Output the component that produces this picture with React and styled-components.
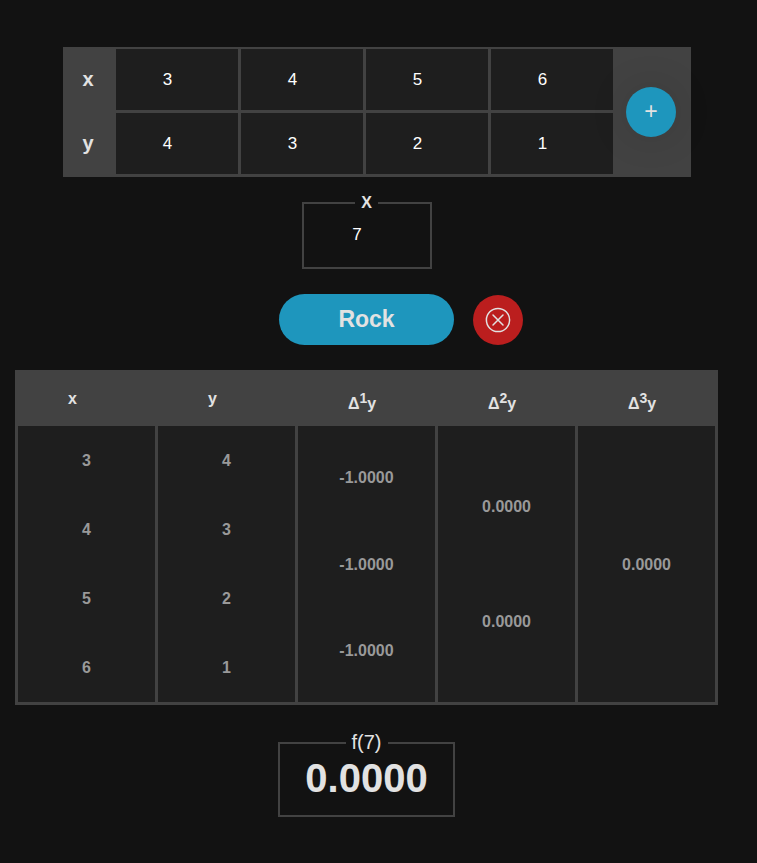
import React, { useState } from "react";
import styled, { createGlobalStyle } from "styled-components";

const GlobalStyle = createGlobalStyle`
  *, *::before, *::after { box-sizing: border-box; }
  body {
    margin: 0;
    background: #121212;
    color: #e2e2e2;
    font-family: "Liberation Sans", Arial, sans-serif;
    font-size: 16px;
  }
`;

const Page = styled.main`
  display: flex;
  flex-direction: column;
  align-items: center;
  padding: 47px 24px 46px 0;
`;

const PointsPanel = styled.section`
  display: flex;
  align-items: center;
  margin-left: 21px;
  padding: 2px 15px 3px 0;
  background: #424242;
`;

const PointsTable = styled.table`
  display: block;
  margin-right: 13px;

  tbody {
    display: grid;
    gap: 3px;
  }

  tr {
    display: grid;
    grid-template-columns: 50px repeat(4, 122px);
    gap: 3px;
  }

  th {
    display: grid;
    place-items: center;
    padding: 0;
    font-size: 20px;
  }

  td {
    padding: 0;
    background: #1e1e1e;
  }
`;

const NumberInput = styled.input`
  display: block;
  width: 100%;
  height: ${(p) => p.$height}px;
  padding: 0 4px 0 0;
  border: 0;
  outline: 0;
  background: transparent;
  color: #fff;
  font-family: inherit;
  font-size: 17px;
  text-align: center;
`;

const RoundButton = styled.button`
  display: grid;
  place-items: center;
  width: 50px;
  height: 50px;
  padding: 0;
  border: 0;
  border-radius: 50%;
  background: ${(p) => p.$color};
  color: #e2e2e2;
  box-shadow: ${(p) => (p.$raised ? "0 0 40px rgba(0, 0, 0, 0.12)" : "none")};
  font: 23px "Liberation Sans", Arial, sans-serif;
  cursor: pointer;
`;

const Field = styled.fieldset`
  width: ${(p) => p.$width}px;
  margin: ${(p) => p.$top}px 0 0;
  padding: 0 0 ${(p) => p.$bottom}px;
  border: 2px solid #424242;
  text-align: center;
`;

const Legend = styled.legend`
  margin: 0 auto;
  padding: 0 6px;
  font-size: ${(p) => p.$size}px;
  font-weight: ${(p) => (p.$bold ? "bold" : "normal")};
`;

const Result = styled.output`
  display: block;
  font-size: 40px;
  font-weight: bold;
  line-height: 49px;
`;

const Actions = styled.div`
  display: grid;
  grid-template-columns: 1fr auto 1fr;
  align-items: center;
  column-gap: 19px;
  width: 100%;
  margin-top: 25px;
`;

const PrimaryButton = styled.button`
  grid-column: 2;
  width: 175px;
  height: 51px;
  padding: 0;
  border: 0;
  border-radius: 26px;
  background: #1e96bd;
  color: #e2e2e2;
  font: bold 23px "Liberation Sans", Arial, sans-serif;
  cursor: pointer;
`;

const DifferenceTable = styled.table`
  display: block;
  width: calc(100% - 30px);
  margin-top: 25px;
  padding: 0 3px 3px;
  background: #424242;

  thead, tbody { display: block; }

  tr {
    display: grid;
    grid-template-columns: repeat(5, minmax(0, 1fr));
    gap: 3px;
  }

  th {
    height: 56px;
    padding: 20px 0 0 50px;
    text-align: left;
  }

  sup { font-size: 14px; }

  td {
    display: flex;
    flex-direction: column;
    justify-content: space-evenly;
    padding: 0;
    background: #1e1e1e;
    color: #999;
    font-weight: bold;
  }
`;

const Value = styled.span`
  height: 69px;
  line-height: 69px;
  text-align: center;
`;

const ClearIcon = () => (
  <svg width="26" height="26" viewBox="0 0 26 26" fill="none" stroke="currentColor" strokeWidth="1.5" strokeLinecap="round" aria-hidden="true">
    <circle cx="13" cy="13" r="11.6" />
    <path d="M8 8l10 10M18 8L8 18" />
  </svg>
);

const columns = [
  ["3", "4", "5", "6"],
  ["4", "3", "2", "1"],
  ["-1.0000", "-1.0000", "-1.0000"],
  ["0.0000", "0.0000"],
  ["0.0000"],
];

export default function App() {
  const [points, setPoints] = useState({ x: [3, 4, 5, 6], y: [4, 3, 2, 1] });
  const [target, setTarget] = useState("7");

  const change = (axis, index, value) =>
    setPoints({ ...points, [axis]: points[axis].map((v, i) => (i === index ? value : v)) });

  return (
    <>
      <GlobalStyle />
      <Page>
        <PointsPanel>
          <PointsTable>
            <tbody>
              {["x", "y"].map((axis) => (
                <tr key={axis}>
                  <th scope="row">{axis}</th>
                  {points[axis].map((value, i) => (
                    <td key={i}>
                      <NumberInput
                        type="number"
                        $height={61}
                        aria-label={`${axis} ${i + 1}`}
                        value={value}
                        onChange={(e) => change(axis, i, e.target.value)}
                      />
                    </td>
                  ))}
                </tr>
              ))}
            </tbody>
          </PointsTable>
          <RoundButton type="button" $color="#1e96bd" $raised aria-label="Add point">+</RoundButton>
        </PointsPanel>

        <Field $width={130} $top={17} $bottom={10}>
          <Legend $size={16} $bold>X</Legend>
          <NumberInput
            type="number"
            $height={45}
            aria-label="X"
            value={target}
            onChange={(e) => setTarget(e.target.value)}
          />
        </Field>

        <Actions>
          <PrimaryButton type="button">Rock</PrimaryButton>
          <RoundButton type="button" $color="#bb1e1e" aria-label="Clear">
            <ClearIcon />
          </RoundButton>
        </Actions>

        <DifferenceTable>
          <thead>
            <tr>
              <th scope="col">x</th>
              <th scope="col">y</th>
              {[1, 2, 3].map((n) => (
                <th scope="col" key={n}>Δ<sup>{n}</sup>y</th>
              ))}
            </tr>
          </thead>
          <tbody>
            <tr>
              {columns.map((values, c) => (
                <td key={c}>
                  {values.map((v, i) => <Value key={i}>{v}</Value>)}
                </td>
              ))}
            </tr>
          </tbody>
        </DifferenceTable>

        <Field $width={177} $top={26} $bottom={12}>
          <Legend $size={20}>f(7)</Legend>
          <Result>0.0000</Result>
        </Field>
      </Page>
    </>
  );
}
